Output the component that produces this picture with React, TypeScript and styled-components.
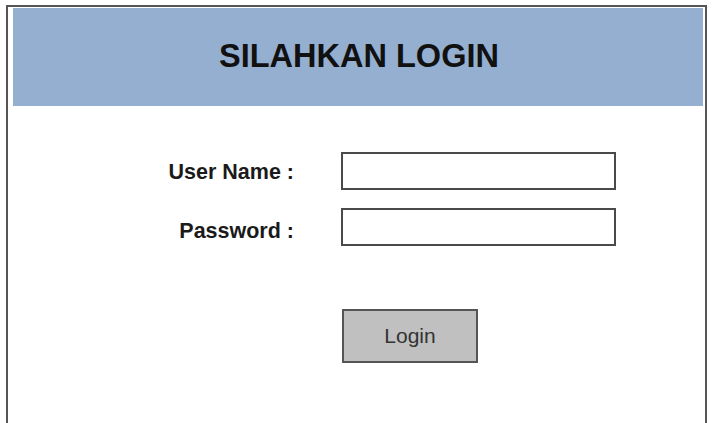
import React from "react";
import styled, { createGlobalStyle } from "styled-components";

const GlobalStyle = createGlobalStyle`
  html, body {
    margin: 0;
    padding: 0;
    background: #ffffff;
    overflow: hidden;
  }
  body {
    font-family: "Liberation Sans", Arial, sans-serif;
  }
`;

const Frame = styled.div`
  box-sizing: border-box;
  margin: 5px 0 0 6px;
  width: 701px;
  height: 430px;
  border: 2px solid #555555;
  border-bottom: none;
  padding: 1px 2px 0 5px;
  display: flex;
  flex-direction: column;
`;

const Header = styled.div`
  height: 98px;
  background: #95afd0;
  display: flex;
  align-items: center;
  justify-content: center;
  padding-left: 2px;
  padding-bottom: 2px;
  box-sizing: border-box;
`;

const Title = styled.h1`
  margin: 0;
  font-size: 32.5px;
  font-weight: bold;
  color: #111111;
`;

const Form = styled.form`
  display: grid;
  grid-template-columns: 281px 275px;
  column-gap: 47px;
  row-gap: 18px;
  margin-top: 46px;
  align-items: center;
`;

const Label = styled.label<{ $drop?: number }>`
  justify-self: end;
  font-size: 21.5px;
  font-weight: bold;
  color: #1a1a1a;
  padding-top: ${(p) => p.$drop ?? 2}px;
`;

const Field = styled.input`
  box-sizing: border-box;
  width: 275px;
  height: 38px;
  border: 2px solid #4a4a4a;
  background: #ffffff;
  margin: 0;
  padding: 0 6px;
  font-family: inherit;
  font-size: 16px;
  outline: none;
`;

const ButtonCell = styled.div`
  grid-column: 2;
  margin-top: 45px;
  padding-left: 1px;
`;

const LoginButton = styled.button`
  box-sizing: border-box;
  width: 136px;
  height: 54px;
  background: #c0c0c0;
  border: 2px solid #555555;
  font-family: "Liberation Sans", Arial, sans-serif;
  font-size: 21px;
  color: #333333;
  padding: 0;
  cursor: pointer;
`;

export default function App() {
  return (
    <>
      <GlobalStyle />
      <Frame>
        <Header>
          <Title>SILAHKAN LOGIN</Title>
        </Header>
        <Form onSubmit={(e) => e.preventDefault()}>
          <Label htmlFor="username" $drop={2}>User Name :</Label>
          <Field id="username" type="text" />
          <Label htmlFor="password" $drop={8}>Password :</Label>
          <Field id="password" type="password" />
          <ButtonCell>
            <LoginButton type="submit">Login</LoginButton>
          </ButtonCell>
        </Form>
      </Frame>
    </>
  );
}
